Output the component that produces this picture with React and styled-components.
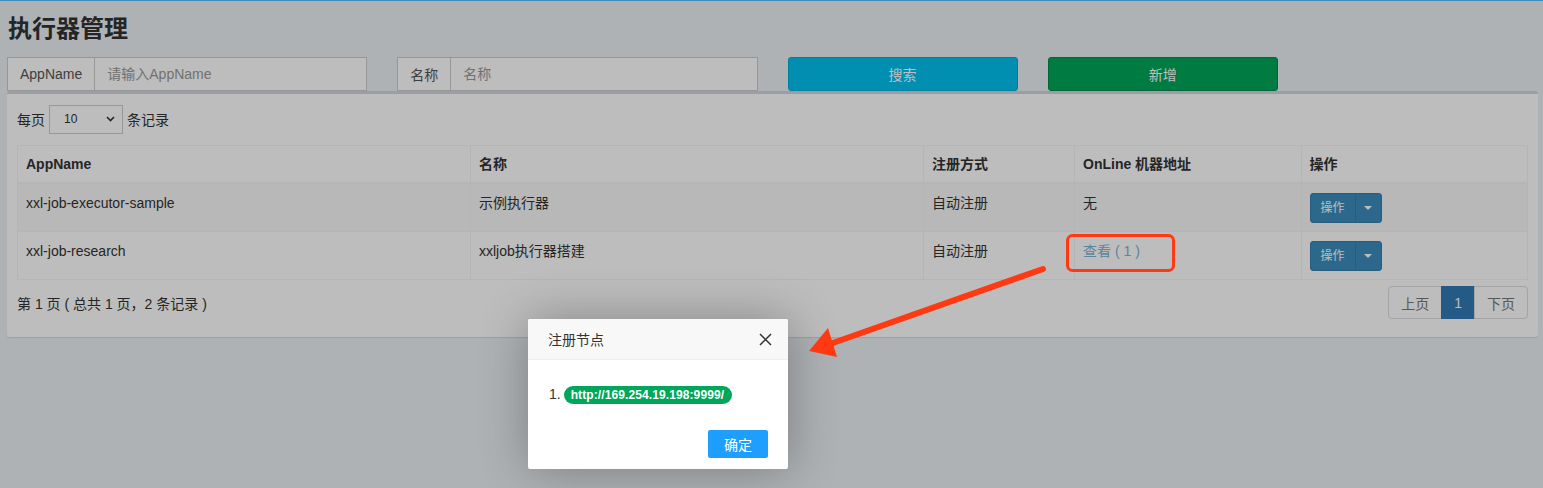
import React from "react"
import styled, { createGlobalStyle } from "styled-components"

const GlobalStyle = createGlobalStyle`
  html, body {
    margin: 0;
    padding: 0;
    background: #ecf0f5;
  }
  body {
    font-family: "Liberation Sans", "Noto Sans CJK SC", sans-serif;
    font-size: 14px;
    color: #333;
  }
`

const Page = styled.div`
  position: relative;
  min-height: 488px;
  border-top: 1px solid #3c8dbc;
  box-sizing: border-box;
`

const Content = styled.section`
  padding: 0 5px 0 7px;
`

const Title = styled.h1`
  margin: 0;
  padding: 15px 0 0 1px;
  font-size: 24px;
  line-height: 26px;
  font-weight: bold;
  color: #333;
`

const FilterRow = styled.div`
  display: grid;
  grid-template-columns: repeat(12, 1fr);
  column-gap: 30px;
  margin-top: 15px;
  height: 34px;
`

const InputGroup = styled.div`
  grid-column: span ${(p) => p.$span};
  display: flex;
  height: 34px;
  box-sizing: border-box;
`

const Addon = styled.span`
  display: flex;
  align-items: center;
  padding: 0 12px;
  border: 1px solid #ccc;
  border-right: none;
  background: #fff;
  color: #555;
  font-size: 14px;
`

const Input = styled.input`
  flex: 1;
  min-width: 0;
  border: 1px solid #ccc;
  padding: 0 12px;
  font: inherit;
  font-size: 14px;
  color: #555;
  outline: none;
  &::placeholder {
    color: #999;
  }
`

const Button = styled.button`
  grid-column: span 2;
  height: 34px;
  border-radius: 3px;
  border: 1px solid ${(p) => p.$border};
  background: ${(p) => p.$bg};
  color: #fff;
  font: inherit;
  font-size: 14px;
`

const Box = styled.div`
  background: #fff;
  border-top: 3px solid #d2d6de;
  border-radius: 3px;
  box-shadow: 0 1px 1px rgba(0, 0, 0, 0.1);
  padding: 10px;
`

const LengthRow = styled.div`
  display: flex;
  align-items: center;
  height: 30px;
  margin-bottom: 11px;
  gap: 4px;
`

const Select = styled.div`
  display: flex;
  align-items: center;
  justify-content: space-between;
  width: 74px;
  height: 29px;
  box-sizing: border-box;
  border: 1px solid #ccc;
  padding: 0 7px 0 14px;
  font-size: 12px;
  color: #333;
  background: #fff;
`

const Table = styled.table`
  width: 100%;
  border-collapse: collapse;
  table-layout: fixed;
  border: 1px solid #f4f4f4;

  th, td {
    border: 1px solid #f4f4f4;
    padding: 9px 8px 8px;
    line-height: 20px;
    text-align: left;
    vertical-align: top;
  }
  th {
    padding: 8px;
    border-bottom-width: 2px;
    font-weight: bold;
  }
`

const Row = styled.tr`
  background: ${(p) => (p.$striped ? "#f9f9f9" : "#fff")};
`

const Link = styled.a`
  color: #7cb2d6;
  text-decoration: none;
`

const SplitButton = styled.div`
  display: inline-flex;
  height: 30px;
  border-radius: 3px;
  overflow: hidden;
  background: #3c8dbc;
  border: 1px solid #367fa9;
  box-sizing: border-box;
  color: #fff;
  font-size: 12px;
`

const SplitMain = styled.span`
  display: flex;
  align-items: center;
  padding: 0 10px;
`

const SplitCaret = styled.span`
  display: flex;
  align-items: center;
  justify-content: center;
  width: 25px;
  border-left: 1px solid #367fa9;

  &::after {
    content: "";
    border-top: 4px solid #fff;
    border-left: 4px solid transparent;
    border-right: 4px solid transparent;
  }
`

const Footer = styled.div`
  display: flex;
  justify-content: space-between;
  align-items: center;
  margin-top: 6px;
  margin-bottom: 8px;
`

const Pager = styled.div`
  display: flex;
  height: 33px;
`

const PageItem = styled.span`
  display: flex;
  align-items: center;
  justify-content: center;
  padding: 0 12px;
  border: 1px solid ${(p) => (p.$active ? "#337ab7" : "#ddd")};
  margin-left: -1px;
  background: ${(p) => (p.$active ? "#337ab7" : "#fff")};
  color: ${(p) => (p.$active ? "#fff" : "#777")};
  &:first-child {
    border-radius: 4px 0 0 4px;
  }
  &:last-child {
    border-radius: 0 4px 4px 0;
  }
`

const Shade = styled.div`
  position: absolute;
  inset: 0;
  background: rgba(0, 0, 0, 0.26);
`

const Dialog = styled.div`
  position: absolute;
  left: 528px;
  top: 318px;
  width: 260px;
  background: #fff;
  border-radius: 2px;
  box-shadow: 1px 1px 50px rgba(0, 0, 0, 0.3);
  overflow: hidden;
`

const DialogHead = styled.div`
  display: flex;
  align-items: center;
  justify-content: space-between;
  height: 41px;
  box-sizing: border-box;
  padding: 0 16px 0 20px;
  background: #f8f8f8;
  border-bottom: 1px solid #eee;
  color: #333;
  font-size: 14px;
`

const DialogBody = styled.div`
  padding: 24px 21px 0;
  color: #333;
  font-size: 14px;
  line-height: 20px;
`

const Badge = styled.span`
  display: inline-block;
  margin-left: 3px;
  padding: 0 8px 0 7px;
  height: 18px;
  line-height: 18px;
  border-radius: 9px;
  background: #00a65a;
  color: #fff;
  font-size: 12px;
  font-weight: bold;
  letter-spacing: 0.1px;
`

const DialogFoot = styled.div`
  display: flex;
  justify-content: flex-end;
  padding: 26px 20px 11px;
`

const OkButton = styled.span`
  display: flex;
  align-items: center;
  justify-content: center;
  width: 60px;
  height: 28px;
  border-radius: 2px;
  background: #1e9fff;
  color: #fff;
  font-size: 14px;
`

const Annotation = styled.svg`
  position: absolute;
  left: 0;
  top: 0;
  pointer-events: none;
`

const rows = [
  { app: "xxl-job-executor-sample", name: "示例执行器", type: "自动注册", online: "无" },
  { app: "xxl-job-research", name: "xxljob执行器搭建", type: "自动注册", online: 1 },
]

const App = () => (
  <>
    <GlobalStyle />
    <Page>
      <Content>
        <Title>执行器管理</Title>
        <FilterRow>
          <InputGroup $span={3}>
            <Addon>AppName</Addon>
            <Input placeholder="请输入AppName" />
          </InputGroup>
          <InputGroup $span={3}>
            <Addon>名称</Addon>
            <Input placeholder="名称" />
          </InputGroup>
          <Button $bg="#00c0ef" $border="#00acd6">搜索</Button>
          <Button $bg="#00a65a" $border="#008d4c">新增</Button>
        </FilterRow>
        <Box>
          <LengthRow>
            每页
            <Select>
              10
              <svg width="9" height="6" viewBox="0 0 9 6">
                <path d="M1 1l3.5 3.5L8 1" fill="none" stroke="#333" strokeWidth="1.6" />
              </svg>
            </Select>
            条记录
          </LengthRow>
          <Table>
            <colgroup>
              <col style={{ width: "30%" }} />
              <col style={{ width: "30%" }} />
              <col style={{ width: "10%" }} />
              <col style={{ width: "15%" }} />
              <col style={{ width: "15%" }} />
            </colgroup>
            <thead>
              <tr>
                <th>AppName</th>
                <th>名称</th>
                <th>注册方式</th>
                <th>OnLine 机器地址</th>
                <th>操作</th>
              </tr>
            </thead>
            <tbody>
              {rows.map((r, i) => (
                <Row key={r.app} $striped={i % 2 === 0}>
                  <td>{r.app}</td>
                  <td>{r.name}</td>
                  <td>{r.type}</td>
                  <td>
                    {typeof r.online === "number" ? (
                      <Link>查看 ( {r.online} )</Link>
                    ) : (
                      r.online
                    )}
                  </td>
                  <td>
                    <SplitButton>
                      <SplitMain>操作</SplitMain>
                      <SplitCaret />
                    </SplitButton>
                  </td>
                </Row>
              ))}
            </tbody>
          </Table>
          <Footer>
            <span>第 1 页 ( 总共 1 页，2 条记录 )</span>
            <Pager>
              <PageItem>上页</PageItem>
              <PageItem $active>1</PageItem>
              <PageItem>下页</PageItem>
            </Pager>
          </Footer>
        </Box>
      </Content>

      <Shade />

      <Dialog>
        <DialogHead>
          注册节点
          <svg width="13" height="13" viewBox="0 0 13 13">
            <path d="M1 1l11 11M12 1L1 12" stroke="#333" strokeWidth="1.5" />
          </svg>
        </DialogHead>
        <DialogBody>
          1.<Badge>http://169.254.19.198:9999/</Badge>
        </DialogBody>
        <DialogFoot>
          <OkButton>确定</OkButton>
        </DialogFoot>
      </Dialog>

      <Annotation width="1543" height="488">
        <rect x="1067.5" y="234.5" width="106" height="35" rx="5" fill="none" stroke="#ff3a12" strokeWidth="3" />
        <line x1="1043" y1="268" x2="830" y2="343" stroke="#ff3a12" strokeWidth="6" strokeLinecap="round" />
        <polygon points="809,350 828,327 837,356" fill="#ff3a12" />
      </Annotation>
    </Page>
  </>
)

export default App
